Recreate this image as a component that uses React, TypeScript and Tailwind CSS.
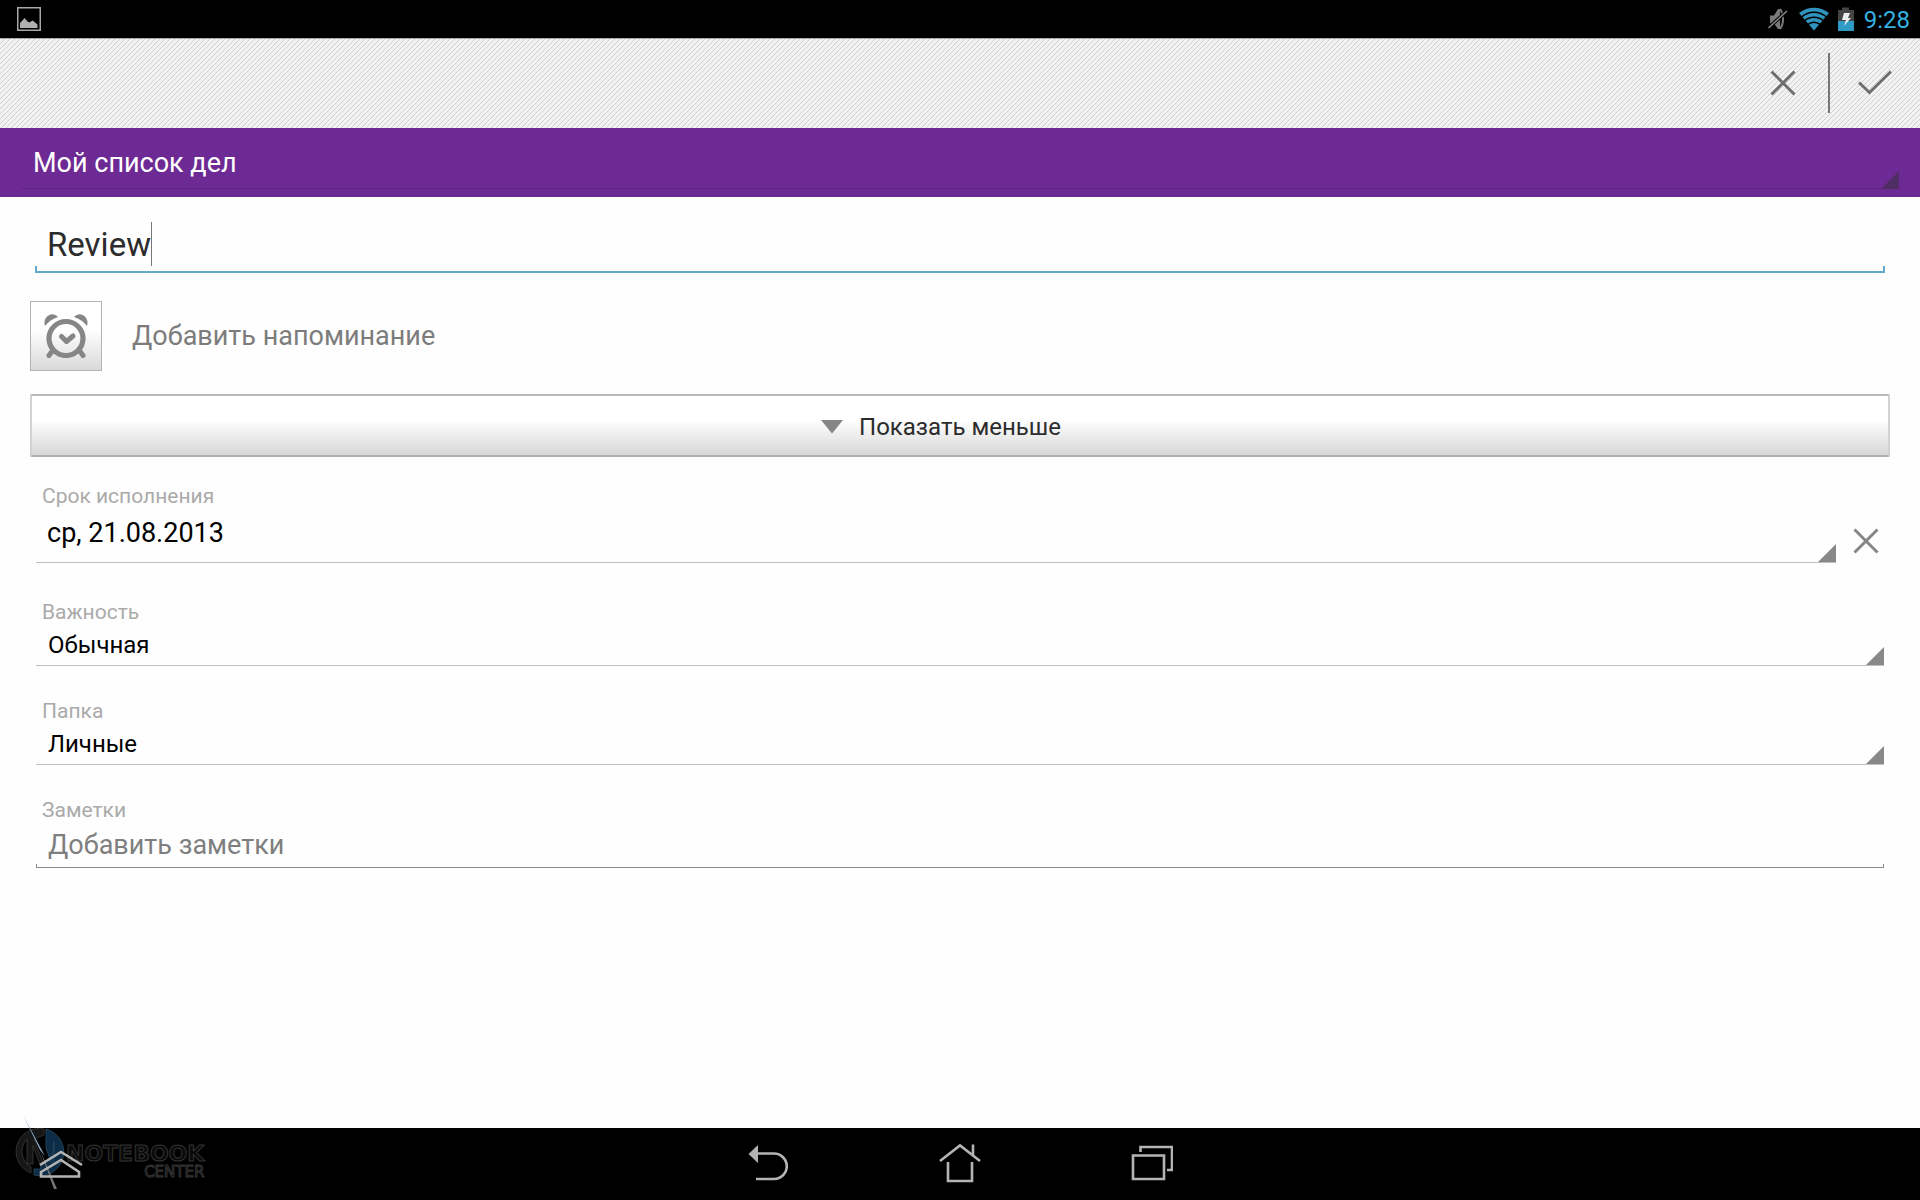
import React, { useState } from "react";

type FieldOption = { id: string; label: string; options: string[] };

const SELECT_FIELDS: FieldOption[] = [
    { id: "priority", label: "Важность", options: ["Обычная", "Высокая", "Низкая"] },
    { id: "folder", label: "Папка", options: ["Личные", "Работа"] },
];

// Small spinner triangle in the bottom right corner of a field
function Corner({ className }: { className: string }) {
    return (
        <svg viewBox="0 0 18 18" className={`pointer-events-none absolute size-[18px] ${className}`} aria-hidden="true">
            <path d="M18 0V18H0Z" fill="currentColor" />
        </svg>
    );
}

function CrossIcon({ className }: { className: string }) {
    return (
        <svg viewBox="0 0 26 26" className={className} fill="none" stroke="currentColor" strokeWidth="3" aria-hidden="true">
            <path d="M1.5 1.5l23 23M24.5 1.5l-23 23" />
        </svg>
    );
}

function StatusBar() {
    return (
        <div className="flex h-[38px] items-center justify-between bg-black pl-[17px] pr-2.5">
            <svg viewBox="0 0 24 24" className="size-6" aria-hidden="true">
                <rect x="0.75" y="0.75" width="22.5" height="22.5" fill="none" stroke="#a8a8a8" strokeWidth="1.5" />
                <path d="M3 21v-5l2-2 2.500-3 3 3.500 2 1 3-2 2 1.500 3 2.500V21z" fill="#b0b0b0" />
            </svg>
            <div className="flex items-center">
                <svg viewBox="0 0 20 22" className="mr-2.5 h-[22px] w-5" aria-hidden="true">
                    <path d="M2 7.500h4L10 1h2v20h-2l-4-5.500H2z" fill="#7a7a7a" />
                    <path d="M12 1c4 5 4 15 0 20" fill="none" stroke="#7a7a7a" strokeWidth="2" />
                    <path d="M0.500 20L19 3" stroke="#000" strokeWidth="3.500" />
                    <path d="M0.500 20L19 3" stroke="#8a8a8a" strokeWidth="1.500" />
                </svg>
                <svg viewBox="0 0 32 24" className="mr-2 h-6 w-8" aria-hidden="true">
                    <path d="M1 6C10 -1 22 -1 31 6L16 23.500Z" fill="#2f93bd" />
                    <path d="M3 10.200C11 3.500 21 3.500 29 10.200M6 14.200C12 9 20 9 26 14.200M9 18C13.500 14.500 18.500 14.500 23 18" fill="none" stroke="#000" strokeWidth="1.500" />
                </svg>
                <svg viewBox="0 0 16 24" className="mr-2.5 h-6 w-4" aria-hidden="true">
                    <path d="M0 3h4V0.500h7V3h5v11H0z" fill="#444" />
                    <path d="M0 14h16v10H0z" fill="#2f9bc5" />
                    <path d="M6 6h6l-2 5h3l-7 8 2-6H4z" fill="#eee" />
                </svg>
                <time className="pt-0.5 text-[24px] leading-6 text-[#35b1e1]">9:28</time>
            </div>
        </div>
    );
}

function ActionBar() {
    return (
        <header className="flex h-[90px] items-center justify-end border-t border-[#aaa] bg-[#f2f2f2] bg-[linear-gradient(135deg,transparent_42%,#cfcfcf_42%,#cfcfcf_58%,transparent_58%)] bg-size-[5px_5px] pb-0.5 text-[#6e6e6e]">
            <button type="button" aria-label="Отмена" className="flex h-full w-[90px] items-center justify-center">
                <CrossIcon className="size-[26px]" />
            </button>
            <div className="h-[60px] w-0.5 bg-[#777]" />
            <button type="button" aria-label="Сохранить" className="flex h-full w-[90px] items-center justify-center">
                <svg viewBox="0 0 34 25" className="h-[25px] w-[34px]" fill="none" stroke="currentColor" strokeWidth="3" aria-hidden="true">
                    <path d="M1 12.500L11.500 22.500L33 1.500" />
                </svg>
            </button>
        </header>
    );
}

function SelectField({ id, label, options }: FieldOption) {
    return (
        <div className="mx-1.5 mt-[33px]">
            <label htmlFor={id} className="block pl-1.5 text-[21px] leading-6 text-[#aaa]">
                {label}
            </label>
            <div className="relative">
                <select id={id} className="block h-[42px] w-full appearance-none border-b border-[#bfbfbf] bg-transparent pl-3 text-[24px] text-black">
                    {options.map((option) => (
                        <option key={option}>{option}</option>
                    ))}
                </select>
                <Corner className="bottom-px right-0 text-[#888]" />
            </div>
        </div>
    );
}

function TaskForm() {
    const [title, setTitle] = useState("Review");
    const [notes, setNotes] = useState("");

    return (
        <main className="flex-1 bg-[#fefefe] px-[30px] pb-10 pt-[25px]">
            <div className="mx-[5px]">
                <div className="flex h-11 pl-3">
                    <input
                        aria-label="Название"
                        value={title}
                        onChange={(e) => setTitle(e.target.value)}
                        className="field-sizing-content pt-0.5 text-[33px] text-[#2c2c2c] outline-none"
                    />
                    <span className="w-px bg-[#777]" />
                </div>
                <div className="h-[7px] border-x-2 border-b-2 border-[#5fabca]" />
            </div>

            <div className="mt-7 flex items-center gap-[30px]">
                <button
                    type="button"
                    id="reminder"
                    aria-label="Напоминание"
                    className="flex h-[70px] w-[72px] items-center justify-center border border-[#b3b3b3] bg-linear-to-b from-white from-40% to-[#d9d9d9]"
                >
                    <svg viewBox="0 0 44 44" className="size-11" fill="none" stroke="#868686" aria-hidden="true">
                        <circle cx="22" cy="24.500" r="17" strokeWidth="5.200" />
                        <path d="M17.500 22.500l5 5 6.500-5.500" strokeWidth="5" strokeLinecap="round" strokeLinejoin="round" />
                        <path d="M9 36l-4 5.500M35 36l4 5.500" strokeWidth="5" strokeLinecap="round" />
                        <path d="M1 12C-2 3 8-4 14 3C8 5 4 8 1 12ZM43 12C46 3 36-4 30 3C36 5 40 8 43 12Z" fill="#868686" stroke="none" />
                    </svg>
                </button>
                <label htmlFor="reminder" className="text-[27px] leading-8 text-[#7c7c7c]">
                    Добавить напоминание
                </label>
            </div>

            <button
                type="button"
                className="mt-[23px] flex h-[63px] w-full items-center justify-center gap-4 rounded-xs border-2 border-x-[#d2d2d2] border-b-[#b0b0b0] border-t-[#b8b8b8] bg-linear-to-b from-white from-40% to-[#d7d7d7] pr-[38px] pt-0.5 text-[24px] text-[#2c2c2c]"
            >
                <svg viewBox="0 0 22 14" className="h-3.5 w-[22px]" aria-hidden="true">
                    <path d="M0 0H22L11 13.500Z" fill="#868686" />
                </svg>
                Показать меньше
            </button>

            <div className="ml-1.5 mt-[27px]">
                <label htmlFor="due" className="block pl-1.5 text-[21px] leading-6 text-[#aaa]">
                    Срок исполнения
                </label>
                <div className="flex items-center">
                    <button
                        type="button"
                        id="due"
                        className="relative h-[55px] flex-1 border-b border-[#bfbfbf] pb-1 pl-[11px] text-left text-[27px] text-black"
                    >
                        ср, 21.08.2013
                        <Corner className="bottom-0 right-0 text-[#888]" />
                    </button>
                    <button type="button" aria-label="Очистить срок" className="flex h-[55px] w-[54px] items-center justify-center pl-1.5 pt-2.5 text-[#868686]">
                        <CrossIcon className="size-[26px]" />
                    </button>
                </div>
            </div>

            <div className="pt-1">
                {SELECT_FIELDS.map((field) => (
                    <SelectField key={field.id} {...field} />
                ))}
            </div>

            <div className="mx-1.5 mt-[33px]">
                <label htmlFor="notes" className="block pl-1.5 text-[21px] leading-6 text-[#aaa]">
                    Заметки
                </label>
                <input
                    id="notes"
                    value={notes}
                    onChange={(e) => setNotes(e.target.value)}
                    placeholder="Добавить заметки"
                    className="block h-[42px] w-full pl-3 pt-1 text-[27px] text-black outline-none placeholder:text-[#7f7f7f]"
                />
                <div className="h-1 border-x border-b border-[#8c8c8c]" />
            </div>
        </main>
    );
}

function Watermark() {
    return (
        <div className="pointer-events-none absolute bottom-2 left-3.5 flex items-end">
            <svg viewBox="0 0 52 78" className="h-[78px] w-[52px]" aria-hidden="true">
                <path d="M30 15A23 23 0 0 0 17 59V53A18 18 0 0 1 13 25V50H19V31L29 59V49L20 25L30 21Z" fill="#161616" stroke="#3a3a3a" strokeWidth="0.800" />
                <path d="M32 15A23 23 0 0 1 20 61V55H27V49A18 18 0 0 0 40 28V48H37L32 34Z" fill="#0d2c47" stroke="#2b4a63" strokeWidth="0.800" />
                <path d="M9 1L31 42L26 36Z" fill="#8aa9c4" />
                <path d="M26 36L43 75L40 75Z" fill="#777" />
            </svg>
            <div className="flex flex-col items-end pb-3 font-['DejaVu_Sans',sans-serif] text-[#0a0a0a] [-webkit-text-stroke:1px_#333]">
                <span className="text-[22px] font-bold leading-5">NOTEBOOK</span>
                <span className="text-[15px] leading-4">CENTER</span>
            </div>
        </div>
    );
}

function NavigationBar() {
    return (
        <nav className="relative flex h-[72px] items-center justify-center bg-black pb-0.5 text-[#b4b4b4]">
            <Watermark />
            <button type="button" aria-label="Развернуть" className="absolute bottom-0 left-0 flex h-full w-[122px] items-center justify-center">
                <svg viewBox="0 0 44 28" className="h-7 w-11" fill="none" stroke="currentColor" strokeWidth="2.600" aria-hidden="true">
                    <path d="M1 15L22 2L43 15M2 22L22 10L40 22V26.500H2Z" />
                </svg>
            </button>
            <button type="button" aria-label="Назад" className="flex h-full w-48 items-center justify-center">
                <svg viewBox="0 0 40 36" className="h-9 w-10" fill="none" stroke="currentColor" strokeWidth="2.600" aria-hidden="true">
                    <path d="M9 8.500H26A12.700 12.700 0 0 1 26 34H8" />
                    <path d="M10 0V18L0.500 9Z" fill="currentColor" stroke="none" />
                </svg>
            </button>
            <button type="button" aria-label="Домой" className="flex h-full w-48 items-center justify-center">
                <svg viewBox="0 0 42 40" className="h-10 w-[42px]" fill="none" stroke="currentColor" strokeWidth="2.600" aria-hidden="true">
                    <path d="M1 18L21 2.500L41 18M34 1.500V12M9 19V38H33V19" />
                </svg>
            </button>
            <button type="button" aria-label="Недавние" className="flex h-full w-48 items-center justify-center">
                <svg viewBox="0 0 42 36" className="h-9 w-[42px]" fill="none" stroke="currentColor" strokeWidth="2.600" aria-hidden="true">
                    <path d="M2 10.500H33V34H2ZM9.500 7V2H41V25H36" />
                </svg>
            </button>
        </nav>
    );
}

export default function App() {
    return (
        <div className="flex min-h-screen flex-col font-[Roboto,'Noto_Sans',sans-serif]">
            <StatusBar />
            <ActionBar />
            <div className="relative h-[69px] bg-[#6e2a94] px-[21px] pb-2">
                <select
                    aria-label="Список"
                    className="block h-[61px] w-full appearance-none border-b border-[#5f2681] bg-transparent pl-3 pt-2.5 text-[27px] text-white"
                >
                    <option>Мой список дел</option>
                </select>
                <Corner className="bottom-2 right-[21px] text-[#4f2f63]" />
            </div>
            <TaskForm />
            <NavigationBar />
        </div>
    );
}
